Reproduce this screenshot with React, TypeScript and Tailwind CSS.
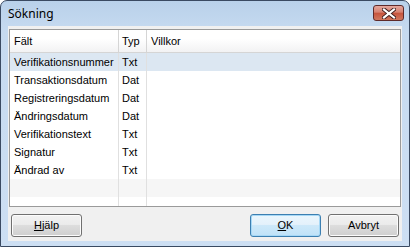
import React from "react";

const rows: [string, string][] = [
  ["Verifikationsnummer", "Txt"],
  ["Transaktionsdatum", "Dat"],
  ["Registreringsdatum", "Dat"],
  ["Ändringsdatum", "Dat"],
  ["Verifikationstext", "Txt"],
  ["Signatur", "Txt"],
  ["Ändrad av", "Txt"],
];

function Btn({ children, def }: { children: React.ReactNode; def?: boolean }) {
  return (
    <div
      className={
        "w-[71px] h-[23px] rounded-[3px] border flex items-center justify-center text-[11px] text-black " +
        (def
          ? "border-[#3c7fb1] bg-[linear-gradient(#eaf6fd_0%,#e4f1fb_45%,#cde8f9_50%,#bfe2f8_100%)] shadow-[inset_0_0_0_1px_#a6d8f6]"
          : "border-[#707070] bg-[linear-gradient(#f2f2f2_0%,#ebebeb_45%,#dddddd_50%,#cfcfcf_100%)] shadow-[inset_0_0_0_1px_#fcfcfc]")
      }
    >
      {children}
    </div>
  );
}

export default function App() {
  return (
    <div
      className="w-[410px] h-[247px] flex flex-col border border-[#3a4a62] rounded-t-[7px] overflow-hidden bg-[linear-gradient(#b9d1ea_0%,#c6daf0_30px,#cddff3_100%)]"
      style={{ fontFamily: '"Liberation Sans", Arial, sans-serif' }}
    >
      <div className="h-[25px] flex items-start justify-between pl-[7px] pr-[5px]">
        <span
          className="mt-[4px] text-[12px] text-black"
          style={{ fontFamily: '"Noto Sans", "Open Sans", sans-serif' }}
        >
          Sökning
        </span>
        <div className="mt-[4px] w-[31px] h-[16px] rounded-[3px] border border-[#5e2a2a] bg-[linear-gradient(#e4a79d_0%,#d6806f_45%,#c6533c_50%,#d0775e_100%)] flex items-center justify-center">
          <svg width="14" height="11" viewBox="0 0 14 11">
            <path
              d="M2 1.5 L12 9.5 M12 1.5 L2 9.5"
              stroke="#3d1d1d"
              strokeWidth="4"
              strokeLinecap="square"
            />
            <path
              d="M2 1.5 L12 9.5 M12 1.5 L2 9.5"
              stroke="#ffffff"
              strokeWidth="2.2"
              strokeLinecap="square"
            />
          </svg>
        </div>
      </div>
      <div className="flex-1 mx-[7px] mb-[5px] bg-[#f0f0f0] flex flex-col">
        <div className="mt-[3px] mx-[1px] h-[178px] border border-[#9a9a9a] bg-white flex flex-col overflow-hidden">
          <div className="h-[23px] flex border-b border-[#d5d5d5] bg-[linear-gradient(#ffffff_0%,#ffffff_40%,#f2f2f3_100%)] text-[11px] text-black">
            <div className="w-[109px] border-r border-[#d5d5d5] pl-[4px] flex items-center">Fält</div>
            <div className="w-[28px] border-r border-[#d5d5d5] pl-[3px] flex items-center">Typ</div>
            <div className="flex-1 pl-[4px] flex items-center">Villkor</div>
          </div>
          {rows.map(([f, t], i) => (
            <div
              key={f}
              className={
                "h-[18px] flex text-[11px] text-black " + (i === 0 ? "bg-[#dce7f2]" : "bg-white")
              }
            >
              <div className="w-[109px] border-r border-[#e0e0e0] pl-[4px] flex items-center">{f}</div>
              <div className="w-[28px] border-r border-[#e0e0e0] pl-[3px] flex items-center">{t}</div>
              <div className="flex-1"></div>
            </div>
          ))}
          <div className="h-[18px] flex bg-[#f6f6f6]">
            <div className="w-[109px] border-r border-[#e0e0e0]"></div>
            <div className="w-[28px] border-r border-[#e0e0e0]"></div>
            <div className="flex-1"></div>
          </div>
          <div className="flex-1 flex bg-white">
            <div className="w-[109px] border-r border-[#e0e0e0]"></div>
            <div className="w-[28px] border-r border-[#e0e0e0]"></div>
            <div className="flex-1"></div>
          </div>
        </div>
        <div className="mt-[7px] flex px-[3px]">
          <Btn>
            <span><u>H</u>jälp</span>
          </Btn>
          <div className="flex-1" />
          <Btn def>
            <span><u>O</u>K</span>
          </Btn>
          <div className="w-[7px]" />
          <Btn>
            <span>Avbryt</span>
          </Btn>
        </div>
      </div>
    </div>
  );
}
